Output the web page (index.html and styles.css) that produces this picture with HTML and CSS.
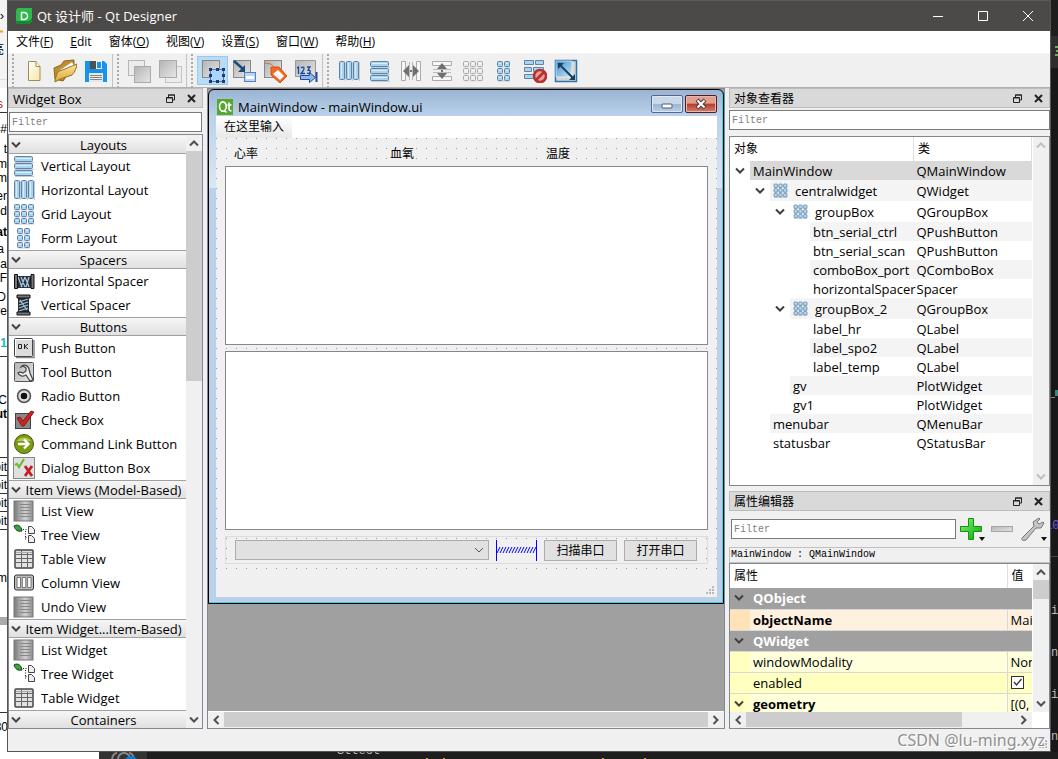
FILE: index.html
```html
<!DOCTYPE html>
<html lang="zh-CN">
<head>
<meta charset="utf-8">
<title>Qt 设计师 - Qt Designer</title>
<link rel="stylesheet" href="styles.css">
</head>
<body>
<svg class="defs" width="0" height="0" aria-hidden="true">
  <defs>
    <linearGradient id="gGrey" x1="0" y1="0" x2="1" y2="1"><stop offset="0" stop-color="#b4b4b4"/><stop offset="1" stop-color="#e6e6e6"/></linearGradient>
    <linearGradient id="gSteel" x1="0" y1="0" x2="1" y2="0"><stop offset="0" stop-color="#7c7c7c"/><stop offset=".6" stop-color="#d0d0d0"/><stop offset="1" stop-color="#8c8c8c"/></linearGradient>
    <linearGradient id="gFolder" x1="0" y1="0" x2="0" y2="1"><stop offset="0" stop-color="#fbe49a"/><stop offset="1" stop-color="#dca938"/></linearGradient>
    <linearGradient id="gPage" x1="0" y1="0" x2="1" y2="1"><stop offset="0" stop-color="#fff"/><stop offset="1" stop-color="#f8e6a0"/></linearGradient>
    <linearGradient id="gPlus" x1="0" y1="0" x2="1" y2="1"><stop offset="0" stop-color="#8cf07c"/><stop offset="1" stop-color="#00a800"/></linearGradient>
    <linearGradient id="gSky" x1="0" y1="0" x2="1" y2="1"><stop offset="0" stop-color="#3f8fd0"/><stop offset="1" stop-color="#cbe6f6"/></linearGradient>
  </defs>
  <symbol id="chev" viewBox="0 0 10 8"><path d="M1 1.5 5 5.5 9 1.5" fill="none" stroke="currentColor" stroke-width="2"/></symbol>
  <symbol id="float" viewBox="0 0 9 9"><path d="M2.5 3V1h6v5H6.500M.5 3.500h6v5h-6zM2 1h7M0 4h7" fill="none" stroke="#222"/></symbol>
  <symbol id="close" viewBox="0 0 9 9"><path d="M1 1l7 7M8 1 1 8" stroke="#222" stroke-width="2"/></symbol>
  <symbol id="vl" viewBox="0 0 22 22"><path class="shade" d="M2 7.500h19M2 14.500h19M2 21.500h19"/><g class="bars"><rect x="1.500" y="1.500" width="18" height="5" rx="1"/><rect x="1.500" y="8.500" width="18" height="5" rx="1"/><rect x="1.500" y="15.500" width="18" height="5" rx="1"/></g><path class="glow" d="M3 3.500h15M3 10.500h15M3 17.500h15"/></symbol>
  <symbol id="hl" viewBox="0 0 22 22"><path class="shade" d="M7.500 2v19M14.500 2v19M21.500 2v19"/><g class="bars"><rect x="1.500" y="1.500" width="5" height="18" rx="1"/><rect x="8.500" y="1.500" width="5" height="18" rx="1"/><rect x="15.500" y="1.500" width="5" height="18" rx="1"/></g><path class="glow" d="M3.500 3v15M10.500 3v15M17.500 3v15"/></symbol>
  <symbol id="grid" viewBox="0 0 22 22"><path class="shade" d="M2 7h19M2 14h19M2 21h19"/><g class="bars"><rect x="1.500" y="1.500" width="5" height="5" rx="1"/><rect x="8.500" y="1.500" width="5" height="5" rx="1"/><rect x="15.500" y="1.500" width="5" height="5" rx="1"/><rect x="1.500" y="8.500" width="5" height="5" rx="1"/><rect x="8.500" y="8.500" width="5" height="5" rx="1"/><rect x="15.500" y="8.500" width="5" height="5" rx="1"/><rect x="1.500" y="15.500" width="5" height="5" rx="1"/><rect x="8.500" y="15.500" width="5" height="5" rx="1"/><rect x="15.500" y="15.500" width="5" height="5" rx="1"/></g><path class="glow" d="M3 3.500h2m5 0h2m5 0h2M3 10.500h2m5 0h2m5 0h2M3 17.500h2m5 0h2m5 0h2"/></symbol>
  <symbol id="form" viewBox="0 0 22 22"><path class="shade" d="M5 7h12M5 14h12M5 21h12"/><g class="bars"><rect x="4.500" y="1.500" width="5" height="5" rx="1"/><rect x="11.500" y="1.500" width="5" height="5" rx="1"/><rect x="4.500" y="8.500" width="5" height="5" rx="1"/><rect x="11.500" y="8.500" width="5" height="5" rx="1"/><rect x="4.500" y="15.500" width="5" height="5" rx="1"/><rect x="11.500" y="15.500" width="5" height="5" rx="1"/></g><path class="glow" d="M6 3.500h2m5 0h2M6 10.500h2m5 0h2M6 17.500h2m5 0h2"/></symbol>
  <symbol id="hspace" viewBox="0 0 22 22"><path d="M4 6h14v12H4z" fill="#26303a"/><path d="M5 7l4 10M8 7l4 10M12 7l4 10M8 17l4-10M13 17l3-10" stroke="#a9c4da" stroke-width="1.300"/><path d="M1.500 4.500h3v14h-3zM18 4.500h3v14h-3z" fill="#777" stroke="#111"/></symbol>
  <symbol id="vspace" viewBox="0 0 22 22"><path d="M5 4h11v14H5z" fill="#26303a"/><path d="M6 8l9-3M6 11l9-3M6 14l9-3M6 17l9-3M7 6l7 10" stroke="#a9c4da" stroke-width="1.300"/><path d="M4 1h13v3H4zM4 18h13v3H4z" fill="#777" stroke="#111"/></symbol>
  <symbol id="tile" viewBox="0 0 22 22"><path d="M3 20.500h18V3" fill="none" stroke="#888" stroke-width="1.500"/><rect x="1.500" y="1.500" width="18" height="18" rx="1" fill="#dcdcdc" stroke="#444"/><path d="M2.500 18.500v-16h16" fill="none" stroke="#fff"/></symbol>
  <symbol id="push" viewBox="0 0 22 22"><use href="#tile"/><path d="M5.500 7.500h3v4h-3zM11.500 7v5M15 7l-3 2.500L15 12" fill="none" stroke="#222"/></symbol>
  <symbol id="tool" viewBox="0 0 22 22"><rect x="1.500" y="1.500" width="19" height="19" rx="1" fill="url(#gGrey)" stroke="#555"/><path d="M8 6c2-3 7-2 8 2l1 4 3 7-3 1-4-6c-3 2-7 1-8-2l2-1 3 1 3-2v-3l-3-2z" fill="#eee" stroke="#444" stroke-width="1.200"/></symbol>
  <symbol id="radio" viewBox="0 0 22 22"><circle cx="11" cy="11" r="6.500" fill="#c4c4c4" stroke="#555" stroke-width="1.500"/><circle cx="11" cy="11" r="4.800" fill="#e8e8e8"/><circle cx="11" cy="11" r="3.300" fill="#111"/></symbol>
  <symbol id="check" viewBox="0 0 22 22"><rect x="2.500" y="4.500" width="15" height="15" fill="#888" stroke="#444"/><path d="M4 9l3-1 3 4 8-10 3 1-10 14H9z" fill="#d42020" stroke="#7a0c0c" stroke-width=".8"/></symbol>
  <symbol id="cmd" viewBox="0 0 22 22"><circle cx="11" cy="11" r="9.500" fill="#7b9c12" stroke="#465a08"/><path d="M4 8a8 7 0 0 1 14 0z" fill="#b3c860"/><path d="M5 11h10M11 6.500l4.500 4.500-4.500 4.500" fill="none" stroke="#fff" stroke-width="2.400"/></symbol>
  <symbol id="dialog" viewBox="0 0 22 22"><rect x=".5" y=".5" width="21" height="21" fill="#e0e0e0" stroke="#888"/><path d="M2 8l2-1 2 3 5-8" fill="none" stroke="#6cba30" stroke-width="2.200"/><path d="M12 9l7 10M19 9l-7 10" stroke="#c31f28" stroke-width="2.800"/></symbol>
  <symbol id="list" viewBox="0 0 22 22"><rect x="1" y="1" width="19" height="20" fill="url(#gSteel)" stroke="#777"/><path d="M3 4.500h2M3 7.500h2M3 10.500h2M3 13.500h2M3 16.500h2M7 4.500h11M7 7.500h11M7 10.500h11M7 13.500h11M7 16.500h11" stroke="#888"/></symbol>
  <symbol id="tree" viewBox="0 0 22 22"><path d="M1 2c3-2 7-1 8 5-4 1-7-1-8-5z" fill="#37a53b" stroke="#123f16"/><path d="M10 5.500h5M12.500 7v10M12.500 13.500h3" stroke="#222" stroke-dasharray="1 1.500" fill="none"/><path d="M15.500 2.500h3l3 3v4h-6zM15.500 11.500h3l3 3v4h-6z" fill="#eee" stroke="#444"/></symbol>
  <symbol id="table" viewBox="0 0 22 22"><rect x="2" y="2" width="18" height="18" rx="1" fill="#e2e2e2" stroke="#444" stroke-width="1.500"/><path d="M8.500 2v18M14.500 5v15M2 6.500h18M2 10.500h18M2 14.500h18" stroke="#666"/><path d="M3 4.500h16" stroke="#aaa"/></symbol>
  <symbol id="column" viewBox="0 0 22 22"><rect x="1.500" y="3" width="19" height="15" rx="2" fill="#bbb" stroke="#333"/><path d="M4 5.500h3.500v10H4zM9.300 5.500h3.500v10H9.300zM14.600 5.500H18v10h-3.400z" fill="#fff" stroke="#777"/></symbol>
  <symbol id="sq" viewBox="0 0 24 24"><rect x="1.500" y="1.500" width="17" height="17" fill="url(#gGrey)" stroke="#888"/></symbol>
  <symbol id="new" viewBox="0 0 24 24"><path d="M6.500 2.500H14l4 5V21.500H6.500z" fill="url(#gPage)" stroke="#a08c50"/><path d="M14 2.500v5h4" fill="#fff" stroke="#a08c50"/></symbol>
  <symbol id="open" viewBox="0 0 24 24"><path d="M1 9l7-3 3-4 10-1v5L10 22 2 20z" fill="#c38f28" stroke="#8c6418"/><path d="M5 12l14-9 2 3-14 14z" fill="#fff" stroke="#999" stroke-width=".6"/><path d="M2 21c1-4 2-7 4-9 5-1 12-5 18-7-1 6-3 9-5 11-5 2-11 3-17 7z" fill="url(#gFolder)" stroke="#94701c"/></symbol>
  <symbol id="save" viewBox="0 0 24 24"><path d="M1 2h19l3 3v18H1z" fill="#1694ec"/><path d="M6 2h12v8H6z" fill="#eee"/><path d="M6 2h6v8H6z" fill="#505050"/><path d="M13 3h4v6h-4z" fill="#1694ec"/><path d="M5 14h14v9H5z" fill="#e8e8e8"/><path d="M6 16.500h12M6 18.500h12M6 20.500h12" stroke="#888"/></symbol>
  <symbol id="front" viewBox="0 0 24 24"><rect x="1.500" y="1.500" width="16" height="15" fill="#ececec" stroke="#b5b5b5"/><rect x="7.500" y="7.500" width="16" height="16" fill="url(#gGrey)" stroke="#aaa"/></symbol>
  <symbol id="back" viewBox="0 0 24 24"><rect x="7.500" y="7.500" width="16" height="16" fill="#ececec" stroke="#c4c4c4"/><rect x="1.500" y="1.500" width="17" height="17" fill="url(#gGrey)" stroke="#aaa"/></symbol>
  <symbol id="widgets" viewBox="0 0 24 24"><use href="#sq"/><rect x="9.500" y="10.500" width="13" height="12" fill="#acd5ff" stroke="#4c78b8"/><path d="M8 9h3v3H8zM15 9h3v3h-3zM21 9h3v3h-3zM8 15h3v3H8zM21 15h3v3h-3zM8 21h3v3H8zM15 21h3v3h-3zM21 21h3v3h-3z" fill="#203a70"/></symbol>
  <symbol id="signals" viewBox="0 0 24 24"><use href="#sq"/><rect x="12.500" y="13.500" width="11" height="9" fill="#b4d6fa" stroke="#5580b8"/><path d="M14 18.500h8" stroke="#fff" stroke-width="3"/><path d="M2 2l9 8" stroke="#1d4a78" stroke-width="2.500"/><path d="M13 6v7H6z" fill="#1d4a78"/></symbol>
  <symbol id="buddy" viewBox="0 0 24 24"><use href="#sq"/><path d="M1 4l7 1 5 5" fill="none" stroke="#c97850"/><path d="M8 8h8l8 9-7 7-9-8z" fill="#f06a28" stroke="#d85010"/><path d="M10 15l5-4 6 6-4 4z" fill="#fff"/></symbol>
  <symbol id="tab" viewBox="0 0 24 24"><path d="M1.500 1.500h20v16h-20z" fill="url(#gGrey)" stroke="#999"/><path d="M3 9l1.500-1v7M7 9c3-2 4 0 2 3l-2 2.500h4M13 8h3l-2 3c4 0 2 5-1 3" fill="none" stroke="#1548a8" stroke-width="1.300"/><path d="M6.500 16.500h9v-3l6 5-6 5v-3h-9z" fill="#8cb8ee" stroke="#204c94"/><path d="M22.500 13v10" stroke="#204c94" stroke-width="2"/></symbol>
  <symbol id="hsplit" viewBox="0 0 22 22"><path d="M1.500 1.500h4v19h-4zM16.500 1.500h4v19h-4z" fill="#f7f7f7" stroke="#aaa"/><path d="M5 11h12" stroke="#707070" stroke-width="2"/><path d="M3 11l6-6v12zM19 11l-6-6v12z" fill="#707070"/><path d="M9.500 2v18M12.500 2v18" stroke="#bbb"/></symbol>
  <symbol id="vsplit" viewBox="0 0 22 22"><path d="M1.500 1.500h19v4h-19zM1.500 16.500h19v4h-19z" fill="#f7f7f7" stroke="#aaa"/><path d="M11 5v12" stroke="#707070" stroke-width="2"/><path d="M11 3l5 6H6zM11 19l5-6H6z" fill="#707070"/><path d="M2 9.500h18M2 12.500h18" stroke="#bbb"/></symbol>
  <symbol id="break" viewBox="0 0 24 24"><g class="bars"><path d="M1.500 1.500h9v4h-9zM12.500 1.500h8v4h-8zM1.500 8.500h7v4h-7zM10.500 8.500h10v4h-10zM1.500 15.500h9v4h-9z"/></g><circle cx="17" cy="17" r="6" fill="#e5a0a0" stroke="#b83030" stroke-width="2.600"/><path d="M13 21l8-8" stroke="#b83030" stroke-width="2.600"/></symbol>
  <symbol id="adjust" viewBox="0 0 24 24"><path d="M1.500 1.500h21v21h-21z" fill="#d4d4d4" stroke="#2f74ac" stroke-width="1.500"/><path d="M2 2h16v16H2z" fill="url(#gSky)" stroke="#fff" stroke-width=".6"/><path d="M6 6l13 13" stroke="#15405e" stroke-width="2"/><path d="M4 4h6l-6 6zM21 21h-6l6-6z" fill="#15405e"/></symbol>
  <symbol id="plus" viewBox="0 0 24 24"><path d="M9.500 1.500h5v8h8v5h-8v8h-5v-8h-8v-5h8z" fill="url(#gPlus)" stroke="#109410"/></symbol>
  <symbol id="minus" viewBox="0 0 24 24"><rect x="1.500" y="9.500" width="21" height="5" fill="url(#gGrey)" stroke="#a6a6a6"/></symbol>
  <symbol id="wrench" viewBox="0 0 24 24"><path d="M1 21L13 9l-1-4 6-4 1 1-3 3 2 2 4-2 1 1-3 5h-5L5 23c-3 1-5 0-4-2z" fill="#c4c4c4" stroke="#777"/></symbol>
  <symbol id="drop" viewBox="0 0 6 4"><path d="M0 0h6L3 4z" fill="#111"/></symbol>
</svg>

<div class="desktop">
  <svg class="behind-left" aria-hidden="true">
    <rect width="8" height="88" fill="#f3f3f3"/><rect y="88" width="8" height="671" fill="#fff"/>
    <path d="M0 31.500h3" stroke="#e8a020" stroke-width="2"/><path d="M0 79.500h8" stroke="#ddd"/>
    <path d="M0 112.500h8M0 356.500h8M0 457.500h8M0 475.500h8M0 493.500h8M0 511.500h8M0 529.500h8M0 712.500h8" stroke="#333"/>
    <rect y="617" width="8" height="8" fill="#aaa"/>
    <g class="behind-text" text-anchor="end">
      <text x="4" y="20">›</text><text x="4" y="54">亮</text><text x="3" y="108" fill="#b02020">s</text><text x="7" y="133">#</text><text x="7" y="153">t</text><text x="7" y="168">m</text><text x="7" y="182">m</text><text x="7" y="200">er</text><text x="7" y="215">nd</text><text x="7" y="236" font-weight="bold">at</text><text x="4" y="253">a</text><text x="7" y="268">na</text><text x="7" y="282">F</text><text x="6" y="301">D</text><text x="7" y="315">re</text><text x="7" y="347" fill="#1bb" font-weight="bold">1</text><text x="7" y="404">C</text><text x="7" y="418" font-weight="bold">ut</text><text x="7" y="471">pit</text><text x="7" y="489">pit</text><text x="7" y="507">pit</text><text x="7" y="525">pit</text><text x="7" y="582">im</text><text x="8" y="731">30</text>
    </g>
  </svg>

  <main class="window">
    <header class="titlebar">
      <svg class="app-icon" viewBox="0 0 16 16"><path d="M2 0h14v13l-3 3H0V2z" fill="#2fb94c"/><path d="M0 13h13l3-3v3l-3 3H0z" fill="#138a30"/><path d="M5.500 4.500H8a3.200 3.200 0 0 1 0 7H5.500z" fill="none" stroke="#fff" stroke-width="1.500"/></svg>
      <h1 class="title">Qt 设计师 - Qt Designer</h1>
      <button class="cap" aria-label="最小化"><svg viewBox="0 0 10 10"><path d="M0 5.500h10"/></svg></button>
      <button class="cap" aria-label="最大化"><svg viewBox="0 0 10 10"><path d="M.5 .5h9v9h-9z"/></svg></button>
      <button class="cap" aria-label="关闭"><svg viewBox="0 0 10 10"><path d="M0 0l10 10M10 0 0 10"/></svg></button>
    </header>

    <nav class="menubar">
      <button>文件(<u>F</u>)</button><button><u>E</u>dit</button><button>窗体(<u>O</u>)</button><button>视图(<u>V</u>)</button><button>设置(<u>S</u>)</button><button>窗口(<u>W</u>)</button><button>帮助(<u>H</u>)</button>
    </nav>

    <div class="toolbars">
      <div class="toolbar">
        <button aria-label="新建"><svg><use href="#new"/></svg></button>
        <button aria-label="打开"><svg><use href="#open"/></svg></button>
        <button aria-label="保存"><svg><use href="#save"/></svg></button>
      </div>
      <div class="toolbar">
        <button aria-label="前置"><svg><use href="#front"/></svg></button>
        <button aria-label="后置"><svg><use href="#back"/></svg></button>
      </div>
      <div class="toolbar">
        <button class="active" aria-label="编辑控件"><svg><use href="#widgets"/></svg></button>
        <button aria-label="编辑信号/槽"><svg><use href="#signals"/></svg></button>
        <button aria-label="编辑伙伴"><svg><use href="#buddy"/></svg></button>
        <button aria-label="编辑 Tab 顺序"><svg><use href="#tab"/></svg></button>
      </div>
      <div class="toolbar">
        <button aria-label="水平布局"><svg class="small"><use href="#hl"/></svg></button>
        <button aria-label="垂直布局"><svg class="small"><use href="#vl"/></svg></button>
        <button aria-label="水平分裂器"><svg class="small"><use href="#hsplit"/></svg></button>
        <button aria-label="垂直分裂器"><svg class="small"><use href="#vsplit"/></svg></button>
        <button aria-label="栅格布局"><svg class="small off"><use href="#grid"/></svg></button>
        <button aria-label="表单布局"><svg class="small"><use href="#form"/></svg></button>
        <button aria-label="打破布局"><svg><use href="#break"/></svg></button>
        <button aria-label="调整大小"><svg><use href="#adjust"/></svg></button>
      </div>
    </div>

    <div class="work">
      <section class="dock">
        <div class="dock-title"><h2>Widget Box</h2><button aria-label="浮动"><svg><use href="#float"/></svg></button><button aria-label="关闭"><svg><use href="#close"/></svg></button></div>
        <input class="filter left-filter" type="text" placeholder="Filter" aria-label="Filter widgets">
        <div class="frame boxlist">
          <div class="cats">
            <button class="cat"><svg><use href="#chev"/></svg><span>Layouts</span></button>
            <div class="item"><svg><use href="#vl"/></svg>Vertical Layout</div>
            <div class="item"><svg><use href="#hl"/></svg>Horizontal Layout</div>
            <div class="item"><svg><use href="#grid"/></svg>Grid Layout</div>
            <div class="item"><svg><use href="#form"/></svg>Form Layout</div>
            <button class="cat"><svg><use href="#chev"/></svg><span>Spacers</span></button>
            <div class="item"><svg><use href="#hspace"/></svg>Horizontal Spacer</div>
            <div class="item"><svg><use href="#vspace"/></svg>Vertical Spacer</div>
            <button class="cat"><svg><use href="#chev"/></svg><span>Buttons</span></button>
            <div class="item"><svg><use href="#push"/></svg>Push Button</div>
            <div class="item"><svg><use href="#tool"/></svg>Tool Button</div>
            <div class="item"><svg><use href="#radio"/></svg>Radio Button</div>
            <div class="item"><svg><use href="#check"/></svg>Check Box</div>
            <div class="item"><svg><use href="#cmd"/></svg>Command Link Button</div>
            <div class="item"><svg><use href="#dialog"/></svg>Dialog Button Box</div>
            <button class="cat"><svg><use href="#chev"/></svg><span>Item Views (Model-Based)</span></button>
            <div class="item"><svg><use href="#list"/></svg>List View</div>
            <div class="item"><svg><use href="#tree"/></svg>Tree View</div>
            <div class="item"><svg><use href="#table"/></svg>Table View</div>
            <div class="item"><svg><use href="#column"/></svg>Column View</div>
            <div class="item"><svg><use href="#list"/></svg>Undo View</div>
            <button class="cat"><svg><use href="#chev"/></svg><span>Item Widget...Item-Based)</span></button>
            <div class="item"><svg><use href="#list"/></svg>List Widget</div>
            <div class="item"><svg><use href="#tree"/></svg>Tree Widget</div>
            <div class="item"><svg><use href="#table"/></svg>Table Widget</div>
            <button class="cat"><svg><use href="#chev"/></svg><span>Containers</span></button>
          </div>
          <div class="vbar"><svg class="arrow up"><use href="#chev"/></svg><div class="track"><div class="thumb tall"></div></div><svg class="arrow"><use href="#chev"/></svg></div>
        </div>
      </section>

      <section class="frame mdi">
        <div class="canvas">
          <div class="sub">
            <header class="sub-title">
              <svg class="qt" viewBox="0 0 16 16"><rect width="16" height="16" fill="#55a82c"/><path d="M8.500 11.500C5 13.500 2.500 11 2.500 7.500S5 2.500 6.500 3 9.500 5 9.300 8 8 11 7.500 11.500l2 2M12 3.500v6c0 2 1 2.500 2.500 2M10.500 6h4" fill="none" stroke="#fff" stroke-width="1.600"/></svg>
              <h2>MainWindow - mainWindow.ui</h2>
              <button class="wbtn" aria-label="最小化"><svg viewBox="0 0 30 16"><rect x="10" y="8" width="10" height="4" rx="1" fill="#fff" stroke="#4a5a70"/></svg></button>
              <button class="wbtn red" aria-label="关闭"><svg viewBox="0 0 30 16"><path d="M11 4l8 8M19 4l-8 8" stroke="#503848" stroke-width="4"/><path d="M11.500 4.500l7 7M18.500 4.500l-7 7" stroke="#fff" stroke-width="2"/></svg></button>
            </header>
            <div class="formwin">
              <div class="form-menu"><button>在这里输入</button></div>
              <div class="central">
                <div class="labels"><span>心率</span><span>血氧</span><span>温度</span></div>
                <div class="plot"></div>
                <div class="plot"></div>
                <div class="serial">
                  <select aria-label="串口"><option></option></select>
                  <svg class="spring" viewBox="0 0 41 21"><path d="M0 0h1v21H0zM40 0h1v21h-1z" fill="#00f"/><path d="M1 13l3-6M4 13l3-6M7 13l3-6M10 13l3-6M13 13l3-6M16 13l3-6M19 13l3-6M22 13l3-6M25 13l3-6M28 13l3-6M31 13l3-6M34 13l3-6M37 13l3-6" stroke="#00f"/></svg>
                  <button>扫描串口</button>
                  <button>打开串口</button>
                </div>
              </div>
              <div class="form-status"><svg class="grip"><path d="M6 0h2v2H6zM3 3h2v2H3zM6 3h2v2H6zM0 6h2v2H0zM3 6h2v2H3zM6 6h2v2H6z" fill="#b8b8b8"/></svg></div>
            </div>
          </div>
        </div>
        <div class="hbar"><svg class="arrow lt"><use href="#chev"/></svg><div class="track"><div class="thumb"></div></div><svg class="arrow rt"><use href="#chev"/></svg></div>
      </section>

      <div class="right">
        <section class="dock inspector">
          <div class="dock-title"><h2>对象查看器</h2><button aria-label="浮动"><svg><use href="#float"/></svg></button><button aria-label="关闭"><svg><use href="#close"/></svg></button></div>
          <input class="filter" type="text" placeholder="Filter" aria-label="Filter objects">
          <div class="frame tree">
            <table>
              <colgroup><col><col class="c-class"></colgroup>
              <thead><tr><th>对象</th><th>类</th></tr></thead>
              <tbody>
                <tr class="sel"><td class="d1"><svg class="exp"><use href="#chev"/></svg><span>MainWindow</span></td><td>QMainWindow</td></tr>
                <tr class="lay"><td class="d2"><svg class="exp"><use href="#chev"/></svg><span><svg class="mini"><use href="#grid"/></svg>centralwidget</span></td><td>QWidget</td></tr>
                <tr class="lay"><td class="d3"><svg class="exp"><use href="#chev"/></svg><span><svg class="mini"><use href="#grid"/></svg>groupBox</span></td><td>QGroupBox</td></tr>
                <tr><td class="d4"><span>btn_serial_ctrl</span></td><td>QPushButton</td></tr>
                <tr><td class="d4"><span>btn_serial_scan</span></td><td>QPushButton</td></tr>
                <tr><td class="d4"><span>comboBox_port</span></td><td>QComboBox</td></tr>
                <tr><td class="d4"><span>horizontalSpacer</span></td><td>Spacer</td></tr>
                <tr class="lay"><td class="d3"><svg class="exp"><use href="#chev"/></svg><span><svg class="mini"><use href="#grid"/></svg>groupBox_2</span></td><td>QGroupBox</td></tr>
                <tr><td class="d4"><span>label_hr</span></td><td>QLabel</td></tr>
                <tr><td class="d4"><span>label_spo2</span></td><td>QLabel</td></tr>
                <tr><td class="d4"><span>label_temp</span></td><td>QLabel</td></tr>
                <tr><td class="d3"><span>gv</span></td><td>PlotWidget</td></tr>
                <tr><td class="d3"><span>gv1</span></td><td>PlotWidget</td></tr>
                <tr><td class="d2"><span>menubar</span></td><td>QMenuBar</td></tr>
                <tr><td class="d2"><span>statusbar</span></td><td>QStatusBar</td></tr>
              </tbody>
            </table>
            <div class="vbar idle"><svg class="arrow up"><use href="#chev"/></svg><div class="track"></div><svg class="arrow"><use href="#chev"/></svg></div>
          </div>
        </section>

        <section class="dock editor">
          <div class="dock-title"><h2>属性编辑器</h2><button aria-label="浮动"><svg><use href="#float"/></svg></button><button aria-label="关闭"><svg><use href="#close"/></svg></button></div>
          <div class="edit-tools">
            <input class="filter" type="text" placeholder="Filter" aria-label="Filter properties">
            <button aria-label="添加"><svg><use href="#plus"/></svg><svg class="drop"><use href="#drop"/></svg></button>
            <button aria-label="删除"><svg><use href="#minus"/></svg></button>
            <button aria-label="配置"><svg><use href="#wrench"/></svg><svg class="drop"><use href="#drop"/></svg></button>
          </div>
          <div class="path">MainWindow : QMainWindow</div>
          <div class="frame props">
            <div class="prop-area">
              <table>
                <colgroup><col class="c-mark"><col><col class="c-val"></colgroup>
                <thead><tr><th colspan="2">属性</th><th>值</th></tr></thead>
                <tbody>
                  <tr class="group"><td><svg class="exp"><use href="#chev"/></svg></td><td colspan="2">QObject</td></tr>
                  <tr class="orange"><td></td><td class="b">objectName</td><td>Main</td></tr>
                  <tr class="group"><td><svg class="exp"><use href="#chev"/></svg></td><td colspan="2">QWidget</td></tr>
                  <tr class="pale"><td></td><td>windowModality</td><td>Non</td></tr>
                  <tr class="yellow"><td></td><td><label for="en">enabled</label></td><td><input id="en" type="checkbox" checked></td></tr>
                  <tr class="pale"><td><svg class="exp"><use href="#chev"/></svg></td><td class="b">geometry</td><td>[(0,</td></tr>
                </tbody>
              </table>
              <div class="vbar"><svg class="arrow up"><use href="#chev"/></svg><div class="track"><div class="thumb short"></div></div><svg class="arrow"><use href="#chev"/></svg></div>
            </div>
            <div class="hbar inset"><svg class="arrow lt"><use href="#chev"/></svg><div class="track"><div class="thumb most"></div></div><svg class="arrow rt"><use href="#chev"/></svg></div>
          </div>
        </section>
      </div>
    </div>

    <footer class="statusbar"><svg class="grip"><path d="M6 0h2v2H6zM3 3h2v2H3zM6 3h2v2H6zM0 6h2v2H0zM3 6h2v2H3zM6 6h2v2H6z" fill="#b8b8b8"/></svg></footer>
    <div class="watermark">CSDN @lu-ming.xyz</div>
  </main>

  <svg class="behind-right" aria-hidden="true">
    <rect width="8" height="36" fill="#1e1e1e"/><rect y="36" width="8" height="32" fill="#2d2d2d"/><rect y="68" width="8" height="691" fill="#181818"/>
    <path d="M4 47h3M5 51h2M4 55h3" stroke="#6fae5c" stroke-width="2"/><path d="M0 397.500h4" stroke="#6a9955"/><path d="M4 390h3v6H4z" fill="#3a8a80"/><path d="M0 556.500h8" stroke="#444"/>
    <g class="behind-code"><text x="-6" y="529" fill="#8458e0">10</text><text x="0" y="614">i</text><text x="0" y="656">n</text><text x="0" y="698">i</text><text x="0" y="740">n</text></g>
  </svg>
  <svg class="behind-bottom" aria-hidden="true">
    <rect width="100%" height="8" fill="#1e1e1e"/><rect width="99" height="8" fill="#fff"/><rect x="99" width="48" height="8" fill="#333"/>
    <path d="M112 8c0-5 3-7 5-7M134 8c0-5-3-7-5-7M118 7a6 6 0 0 1 12 0" fill="none" stroke="#888" stroke-width="2"/><circle cx="131" cy="11" r="7" fill="#0e7ac8"/>
    <text class="behind-code" x="337" y="2">Sttect</text>
    <path d="M426 6.500h2M443 6.500h2M602 6.500h2M644 6.500h2" stroke="#c8a060"/>
  </svg>
</div>
</body>
</html>
```
FILE: styles.css
```css
* { box-sizing: border-box; }
body {
  margin: 0;
  height: 100vh;
  overflow: hidden;
  font: 13px/18px "Open Sans", "Noto Sans CJK SC", sans-serif;
  color: #000;
  background: #1e1e1e;
}
h1, h2 { margin: 0; font-size: 13px; font-weight: normal; }
button, input, select { font: inherit; color: inherit; margin: 0; padding: 0; }
button { border: 0; background: none; }
svg { display: block; flex: none; --fill: #a6d4f2; --line: #6482a2; --hi: #d8effb; --shade: #c4ccd4; }
.defs { position: absolute; }
.bars { fill: var(--fill); stroke: var(--line); }
.glow { stroke: var(--hi); fill: none; }
.shade { stroke: var(--shade); fill: none; }
.off { --fill: #ececec; --line: #aaa; --hi: #fff; --shade: #e0e0e0; }

.desktop {
  display: grid;
  grid-template-columns: 7px 1fr 7px;
  grid-template-rows: 1fr 7px;
  height: 100%;
}
.behind-left, .behind-right { width: 7px; height: 100%; }
.behind-bottom { grid-column: 1 / -1; width: 100%; height: 7px; }
.behind-text { font: 12px "Liberation Sans", "Noto Sans CJK SC", sans-serif; }
.behind-code { font: 12px "Liberation Mono", monospace; fill: #bbb; }

.window {
  position: relative;
  display: flex;
  flex-direction: column;
  min-width: 0;
  min-height: 0;
  background: #f0f0f0;
  border: 1px solid #555;
  border-width: 0 1px 1px;
}
.titlebar {
  display: flex;
  align-items: center;
  height: 31px;
  padding-left: 8px;
  background: #4c4a48;
  border-top: 1px solid #5c5a58;
  color: #fff;
}
.app-icon { width: 16px; height: 16px; }
.title { flex: 1; padding-left: 5px; }
.cap { width: 45px; height: 30px; display: grid; place-items: center; }
.cap svg { width: 10px; height: 10px; fill: none; stroke: #fff; }

.menubar { display: flex; gap: 1px; height: 23px; background: #fff; border-bottom: 1px solid #f4f4f4; }
.menubar button { padding: 0 8px; font-size: 12px; line-height: 22px; }

.toolbars { display: flex; height: 34px; border-bottom: 1px solid #b0b0b0; }
.toolbar {
  display: flex;
  align-items: center;
  padding: 0 1px 0 10px;
  border-right: 1px solid #c2c2c2;
  background: radial-gradient(circle at 1px 1px, #aaa 1px, transparent 1px) 4px 4px / 3px 4px repeat-y;
}
.toolbar:last-child { border-right: 0; }
.toolbar button { display: grid; place-items: center; width: 31px; height: 29px; }
.toolbar svg { width: 24px; height: 24px; }
.toolbar svg.small { width: 22px; height: 22px; }
.toolbar .active { background: #b9dcf5; outline: 1px solid #99c9ef; outline-offset: -1px; }

.work {
  flex: 1;
  min-height: 0;
  display: grid;
  grid-template-columns: 195px 1fr 321px;
  gap: 4px;
}
.dock { display: flex; flex-direction: column; min-width: 0; min-height: 0; }
.dock-title {
  display: flex;
  align-items: center;
  gap: 2px;
  height: 20px;
  padding: 1px 1px 0 4px;
  background: #d9d9d9;
  border: 1px solid #bcbcbc;
  flex: none;
}
.dock-title h2 { flex: 1; }
.right .dock-title h2 { font-size: 12px; }
.dock-title button { width: 19px; height: 17px; display: grid; place-items: center; }
.dock-title svg { width: 9px; height: 9px; }
.filter {
  height: 20px;
  min-width: 0;
  flex: none;
  margin-top: 2px;
  padding: 0 2px;
  border: 1px solid #7a7a7a;
  background: #fff;
  font: 10px "Liberation Mono", monospace;
}
.filter::placeholder { color: #808080; opacity: 1; }
.left-filter { margin: 4px 1px 2px; }
.frame { border: 1px solid #828790; background: #fff; min-width: 0; min-height: 0; }

.boxlist { flex: 1; display: flex; overflow: hidden; }
.cats { flex: 1; min-width: 0; overflow: hidden; }
.cat {
  display: flex;
  align-items: center;
  width: 100%;
  height: 19px;
  padding-left: 2px;
  border: 1px solid #a0a0a0;
  border-width: 1px 0;
  background: linear-gradient(#f6f6f6, #e0e0e0);
  white-space: nowrap;
}
.cat:first-child { border-top-color: #eee; }
.cat svg { width: 10px; height: 8px; color: #444; }
.cat span { flex: 1; text-align: center; }
.item { display: flex; align-items: center; gap: 6px; height: 24px; padding-left: 4px; white-space: nowrap; }
.item svg { width: 22px; height: 22px; }

.vbar { display: flex; flex-direction: column; align-items: center; width: 16px; background: #f0f0f0; flex: none; }
.hbar { display: flex; align-items: center; height: 16px; background: #f0f0f0; flex: none; }
.arrow { width: 10px; height: 8px; margin: 4px 3px; color: #505050; }
.up { transform: rotate(180deg); }
.lt { transform: rotate(90deg); }
.rt { transform: rotate(-90deg); }
.track { flex: 1; align-self: stretch; }
.thumb { height: 100%; background: #cdcdcd; }
.tall { height: 41%; }
.short { height: 16%; }
.hbar .thumb { height: 15px; }
.most { width: 80%; }
.idle .arrow { color: #bfbfbf; }

.mdi { display: flex; flex-direction: column; }
.canvas { flex: 1; min-height: 0; overflow: hidden; background: #a0a0a0; border-bottom: 1px solid #fff; }
.sub {
  padding: 0 6px 6px 7px;
  border: 1px solid #000;
  border-radius: 6px 6px 0 0;
  box-shadow: inset -1px -1px #3fd0e4;
  background: linear-gradient(#9ab4d2, #bad2ea 26px, #dbe7f4 98px, #b9d1ea 98px);
}
.sub-title { display: flex; align-items: center; height: 26px; padding-top: 2px; gap: 2px; }
.sub-title h2 { flex: 1; padding: 5px 0 0 3px; }
.qt { width: 16px; height: 16px; margin: 6px 0 0 1px; }
.wbtn { width: 32px; height: 18px; border: 1px solid #53688a; border-radius: 2px; background: linear-gradient(#c8d8e8 50%, #9bb5d2 50%, #b8d0e8); box-shadow: inset 0 0 0 1px #dce8f4; }
.wbtn svg { width: 30px; height: 16px; }
.red { border-color: #5a1a20; background: linear-gradient(#dfa090 45%, #b83c28 50%, #d08070); box-shadow: inset 0 0 0 1px #e8b8ac; }
.formwin { background: #f0f0f0; font-size: 12px; }
.form-menu { display: flex; height: 22px; background: #fff; }
.form-menu button { padding: 0 8px; background: linear-gradient(#fff, #e8e8e8); }
.central {
  display: flex;
  flex-direction: column;
  gap: 6px;
  padding: 6px 9px 8px;
  background-image: conic-gradient(from 0deg at 1px 1px, transparent 75%, #999 0);
  background-size: 10px 10px;
}
.labels { display: grid; grid-template-columns: repeat(3, 156px); height: 16px; padding-left: 9px; }
.plot { height: 179px; border: 1px solid #828790; background: #fff; }
.labels span { justify-self: start; background: #f0f0f0; line-height: 20px; }
.serial { display: flex; align-items: center; height: 28px; padding: 0 10px 0 9px; border: 1px solid #dcdcdc; gap: 7px; }
.serial select {
  flex: 1;
  min-width: 0;
  height: 20px;
  appearance: none;
  border: 1px solid #adadad;
  border-radius: 0;
  background: url("data:image/svg+xml,%3Csvg xmlns='http://www.w3.org/2000/svg' width='10' height='6'%3E%3Cpath d='M1 1l4 4 4-4' fill='none' stroke='%23555'/%3E%3C/svg%3E") right 4px center no-repeat #e1e1e1;
}
.serial button { width: 73px; height: 21px; border: 1px solid #adadad; background: #e1e1e1; line-height: 20px; }
.spring { width: 41px; height: 21px; background: #f0f0f0; }
.form-status { display: flex; justify-content: flex-end; align-items: flex-end; height: 25px; padding: 2px; }
.grip { width: 9px; height: 9px; }

.right { display: flex; flex-direction: column; gap: 5px; min-width: 0; min-height: 0; }
.inspector { flex: 1; }
.tree { flex: 1; display: flex; justify-content: space-between; margin-top: 6px; overflow: hidden; }
table { border-collapse: collapse; table-layout: fixed; flex: 1; min-width: 0; width: 100%; align-self: flex-start; }
.tree table, .props table { margin-right: 1px; }
td, th { padding: 0 3px; white-space: nowrap; overflow: hidden; text-align: left; font-weight: normal; }
th { height: 24px; font-size: 12px; border-right: 1px solid #e0e0e0; padding-left: 4px; }
.c-class { width: 118px; }
.tree tbody tr { height: 19px; }
.tree tbody tr.lay { height: 21px; }
.tree td:first-child { display: flex; padding: 0; height: 19px; }
.tree .lay td:first-child { height: 21px; }
.tree td span { display: flex; flex: 1; align-items: center; padding-left: 3px; gap: 7px; }
.exp { width: 10px; height: 8px; color: #404040; align-self: center; }
.tree .exp { margin: 0 5px 0 -15px; }
.tree .d1 { margin-left: 20px; }
.tree .d2 { margin-left: 40px; }
.tree .d3 { margin-left: 60px; }
.tree .d4 { margin-left: 80px; }
.mini { width: 15px; height: 15px; --line: #54779c; }
.tree td { overflow: visible; }
.tree tr:nth-child(even) span, .tree tbody tr:nth-child(even) td:last-child { background: #f4f4f4; }
.tree .sel span, .tree .sel td:last-child { background: #d9d9d9; }

.edit-tools { display: flex; align-items: center; height: 36px; padding: 0 1px 0 2px; gap: 3px; flex: none; }
.edit-tools .filter { flex: 1; margin: 0; }
.edit-tools button { display: flex; width: 28px; align-items: flex-end; }
.edit-tools svg { width: 24px; height: 24px; }
.edit-tools .drop { width: 6px; height: 4px; margin-left: -4px; }
.path { height: 16px; padding: 0 1px; border: 1px solid #c0c0c0; font: 10px/14px "Liberation Mono", monospace; white-space: pre; flex: none; }
.props { display: flex; flex-direction: column; height: 166px; flex: none; overflow: hidden; }
.prop-area { flex: 1; display: flex; min-height: 0; overflow: hidden; }
.c-mark { width: 20px; }
.c-val { width: 25px; }
.props .prop-area tbody tr { height: 21px; border-bottom: 1px solid #d8d8d8; }
.props td:last-child { border-left: 1px solid #d8d8d8; text-overflow: clip; }
.props th:last-child { border-right: 0; }
.props .exp { margin-left: 1px; }
.props .group { background: #a0a0a0; color: #fff; }
.props .group td:last-child { border-left: 0; }
.group td, .b { font-weight: bold; }
.orange { background: #fff1e0; }
.orange td:first-child { background: #ffe2b8; }
.pale { background: #ffffdc; }
.pale td:first-child, .yellow { background: #ffffbf; }
.props input {
  appearance: none;
  display: block;
  width: 13px;
  height: 13px;
  border: 1px solid #333;
  background: url("data:image/svg+xml,%3Csvg xmlns='http://www.w3.org/2000/svg' width='11' height='11'%3E%3Cpath d='M2 5l2.500 3L9.500 2' fill='none' stroke='%23333' stroke-width='1.300'/%3E%3C/svg%3E") #fff;
}
.inset { margin-right: 17px; }

.statusbar { display: flex; align-items: flex-end; justify-content: flex-end; height: 22px; padding: 2px; flex: none; }
.watermark {
  position: absolute;
  right: 5px;
  bottom: 0;
  font: 16px/22px "Noto Sans", sans-serif;
  color: #909090;
  text-shadow: 1px 1px #fff;
}
```
